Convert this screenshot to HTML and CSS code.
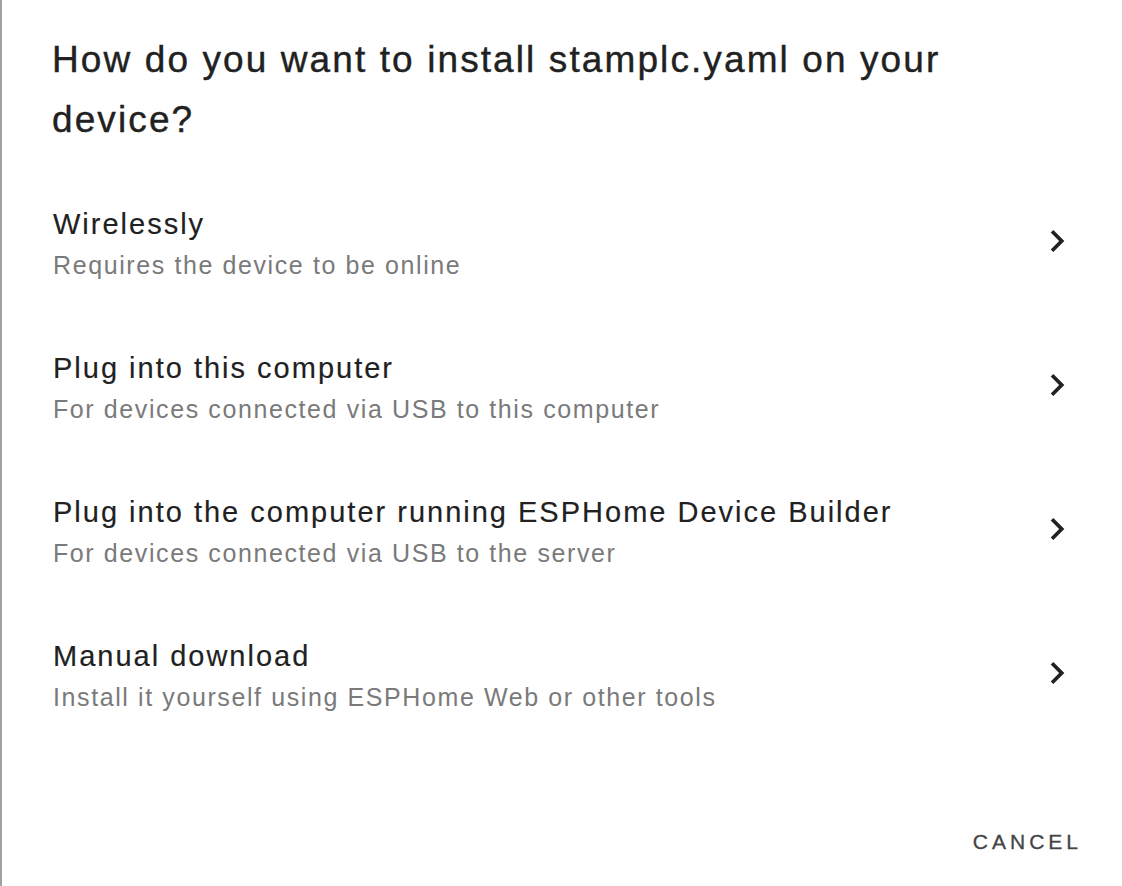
FILE: index.html
```html
<!DOCTYPE html>
<html lang="en">
<head>
<meta charset="utf-8">
<title>Install</title>
<link rel="stylesheet" href="styles.css">
</head>
<body>
<div class="dialog">
  <h2 class="title">How do you want to install stamplc.yaml on your device?</h2>
  <div class="list">
    <div class="item">
      <div class="text">
        <div class="primary">Wirelessly</div>
        <div class="secondary">Requires the device to be online</div>
      </div>
      <svg class="chev" viewBox="0 0 24 24"><path d="M10 6L8.59 7.41 13.17 12l-4.58 4.59L10 18l6-6z"/></svg>
    </div>
    <div class="item">
      <div class="text">
        <div class="primary">Plug into this computer</div>
        <div class="secondary">For devices connected via USB to this computer</div>
      </div>
      <svg class="chev" viewBox="0 0 24 24"><path d="M10 6L8.59 7.41 13.17 12l-4.58 4.59L10 18l6-6z"/></svg>
    </div>
    <div class="item">
      <div class="text">
        <div class="primary">Plug into the computer running ESPHome Device Builder</div>
        <div class="secondary">For devices connected via USB to the server</div>
      </div>
      <svg class="chev" viewBox="0 0 24 24"><path d="M10 6L8.59 7.41 13.17 12l-4.58 4.59L10 18l6-6z"/></svg>
    </div>
    <div class="item">
      <div class="text">
        <div class="primary">Manual download</div>
        <div class="secondary">Install it yourself using ESPHome Web or other tools</div>
      </div>
      <svg class="chev" viewBox="0 0 24 24"><path d="M10 6L8.59 7.41 13.17 12l-4.58 4.59L10 18l6-6z"/></svg>
    </div>
  </div>
  <div class="actions">
    <button class="cancel">CANCEL</button>
  </div>
</div>
</body>
</html>
```

FILE: styles.css
```css
html, body {
  margin: 0;
  padding: 0;
  background: #ffffff;
}
body {
  font-family: "Liberation Sans", Arial, sans-serif;
  color: #212121;
}
.dialog {
  box-sizing: border-box;
  height: 886px;
  border-left: 2px solid #a2a2a2;
  display: flex;
  flex-direction: column;
}
.title {
  margin: 0;
  padding: 30px 150px 0 50px;
  font-size: 37px;
  line-height: 60px;
  font-weight: normal;
  letter-spacing: 2.1px;
  -webkit-text-stroke: 0.4px #212121;
  color: #212121;
}
.list {
  padding-top: 21px;
  display: flex;
  flex-direction: column;
}
.item {
  height: 144px;
  display: flex;
  align-items: center;
  padding: 0 43px 0 51px;
}
.text {
  flex: 1;
}
.primary {
  font-size: 29px;
  line-height: 36px;
  letter-spacing: 2px;
  -webkit-text-stroke: 0.15px #212121;
  color: #212121;
}
.secondary {
  margin-top: 7px;
  font-size: 25px;
  line-height: 32px;
  letter-spacing: 1.6px;
  color: #7a7a7a;
}
.chev {
  width: 44px;
  height: 44px;
  fill: #212121;
  margin-top: -4px;
}
.actions {
  margin-top: auto;
  display: flex;
  justify-content: flex-end;
  padding: 0 28px 22px 0;
}
.cancel {
  border: 0;
  background: transparent;
  font-family: "Liberation Sans", Arial, sans-serif;
  font-size: 21px;
  letter-spacing: 4px;
  -webkit-text-stroke: 0.3px #444444;
  color: #444444;
  padding: 10px 12px;
}
```
